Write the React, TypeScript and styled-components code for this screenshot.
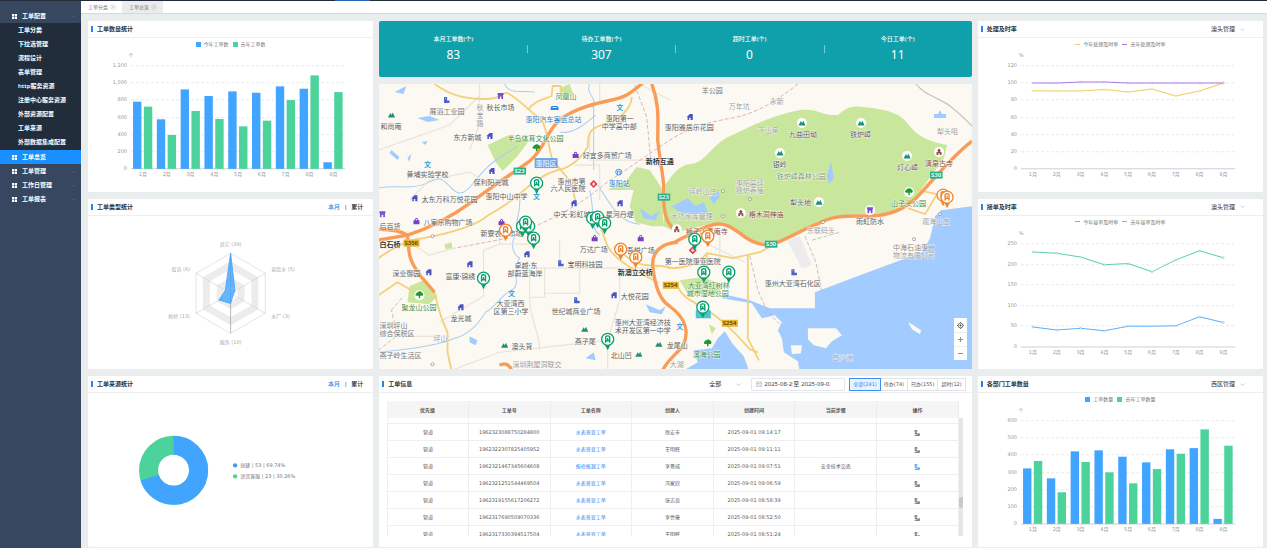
import React from "react";
import styled, { createGlobalStyle, css } from "styled-components";

const SANS = `"Noto Sans", "Noto Sans CJK SC", sans-serif`;
const DATA = `"DejaVu Sans", "Noto Sans CJK SC", sans-serif`;
const BLUE = "#41a5ff";
const GREEN = "#4bd39b";
const MONTHS = ["1月", "2月", "3月", "4月", "5月", "6月", "7月", "8月", "9月"];

const GlobalStyle = createGlobalStyle`
  *, *::before, *::after { box-sizing: border-box; }
  body { margin: 0; background: #e9edee; font-family: ${SANS}; font-size: 6px; line-height: 8px; color: #333; }
  button, input, select { font: inherit; color: inherit; margin: 0; padding: 0; border: 0; background: none; }
  ul { list-style: none; margin: 0; padding: 0; }
  h2 { margin: 0; font-size: 6px; }
`;

/* ---------- shell ---------- */

const Page = styled.div`
  min-height: 100vh;
  display: flex;
  flex-direction: column;
`;

const TopStrip = styled.div`
  height: 1px;
  display: flex;
  background: #242c3a;
  padding-left: 335px;
  &::after { content: ""; width: 35px; background: #2a62b8; }
`;

const Shell = styled.div`
  flex: 1;
  display: flex;
`;

const Sidebar = styled.nav`
  width: 81px;
  flex: none;
  padding-top: 8px;
  background: #36475f;
  color: #fff;
`;

const MenuLink = styled.a<{ $active?: boolean }>`
  display: flex;
  align-items: center;
  gap: 5px;
  height: 14px;
  padding: 0 5px 0 12px;
  color: #fff;
  font-weight: 600;
  text-decoration: none;
  background: ${(p) => (p.$active ? "#1890ff" : "transparent")};
`;

const MenuText = styled.span`
  flex: 1;
  white-space: nowrap;
`;

const SubMenu = styled.ul`
  background: #222d3c;
  padding-bottom: 1px;
`;

const SubLink = styled.a`
  display: flex;
  align-items: center;
  height: 14px;
  padding-left: 18px;
  color: #fff;
  font-weight: 600;
  text-decoration: none;
  white-space: nowrap;
`;

const Main = styled.main`
  flex: 1;
  min-width: 0;
  display: flex;
  flex-direction: column;
`;

const TabBar = styled.div`
  display: flex;
  height: 13px;
  flex: none;
  background: #fff;
  border-bottom: 1px solid #d5dadd;
`;

const Tab = styled.button<{ $active?: boolean }>`
  display: flex;
  align-items: center;
  gap: 2px;
  width: 41px;
  padding-left: 7px;
  font-size: 5px;
  white-space: nowrap;
  color: #777;
  background: ${(p) => (p.$active ? "#ececec" : "#fff")};
`;

const Board = styled.div`
  flex: 1;
  display: grid;
  grid-template-columns: 285fr 592fr 285fr;
  grid-template-rows: repeat(3, minmax(170px, 1fr));
  gap: 7px 6px;
  padding: 7px 4px 1px 7px;
`;

/* ---------- cards ---------- */

const Card = styled.section`
  min-width: 0;
  display: flex;
  flex-direction: column;
  background: #fff;
  border-radius: 1px;
`;

const CardHead = styled.header<{ $pad: number }>`
  display: flex;
  align-items: center;
  height: 17px;
  flex: none;
  padding: 0 ${(p) => p.$pad}px 0 3px;
  border-bottom: 1px solid #eceef0;
`;

const Title = styled.h2`
  flex: 1;
  display: flex;
  align-items: center;
  gap: 4px;
  font-weight: 600;
  color: #2b3240;
  &::before { content: ""; width: 2px; height: 6px; background: #2b83e6; }
`;

const CardBody = styled.div`
  flex: 1;
  min-height: 0;
  display: flex;
  flex-direction: column;
`;

const Legend = styled.ul`
  display: flex;
  justify-content: center;
  gap: 4px;
  height: 12px;
  flex: none;
`;

const LegendItem = styled.li<{ $color: string; $line?: boolean }>`
  display: flex;
  align-items: center;
  gap: 3px;
  font-size: 5px;
  color: #777;
  &::before {
    content: "";
    width: 5px;
    height: ${(p) => (p.$line ? 1 : 5)}px;
    background: ${(p) => p.$color};
  }
`;

const Chart = styled.svg`
  flex: 1;
  min-height: 0;
  width: 100%;
  display: block;
  font-family: ${DATA};
  font-size: 5px;
`;

const SelectBox = styled.span<{ $gap: number }>`
  display: flex;
  align-items: center;
  gap: ${(p) => p.$gap}px;
`;

const Select = styled.select`
  appearance: none;
  color: #333;
  outline: none;
`;

const Toggle = styled.div`
  display: flex;
  gap: 4px;
`;

const ToggleButton = styled.button<{ $on?: boolean }>`
  color: ${(p) => (p.$on ? "#1e88f5" : "#222")};
  font-weight: 500;
`;

/* ---------- stats + map ---------- */

const Center = styled.div`
  grid-column: 2;
  grid-row: 1 / 3;
  min-width: 0;
  display: flex;
  flex-direction: column;
  gap: 7px;
`;

const Stats = styled.dl`
  display: flex;
  height: 56px;
  flex: none;
  margin: 0;
  background: #0fa0ab;
  border-radius: 2px;
  color: #fff;
`;

const Stat = styled.div`
  flex: 1;
  display: flex;
  flex-direction: column;
  justify-content: center;
  align-items: center;
  gap: 4px;
`;

const StatLabel = styled.dt`
  font-weight: 500;
`;

const StatValue = styled.dd`
  margin: 0;
  font-size: 12px;
  line-height: 16px;
`;

const Divider = styled.div`
  align-self: center;
  width: 1px;
  margin: 0 -1px 0 0;
  height: 8px;
  background: #7ecbd1;
`;

const MapBox = styled.div`
  position: relative;
  flex: 1;
  min-height: 0;
  overflow: hidden;
  background: #fcf9f2;
`;

const MapSvg = styled.svg`
  position: absolute;
  inset: 0;
  width: 100%;
  height: 100%;
  font-family: ${SANS};
  font-size: 7px;
`;

const MapTools = styled.div`
  position: absolute;
  right: 5px;
  bottom: 9px;
  width: 13px;
  background: #fff;
  display: flex;
  flex-direction: column;
`;

const MapTool = styled.button`
  height: 14px;
  display: flex;
  align-items: center;
  justify-content: center;
  & + & { border-top: 1px solid #eee; }
`;

/* ---------- order table ---------- */

const DateRange = styled.div`
  display: flex;
  align-items: center;
  width: 94px;
  height: 13px;
  padding-left: 4px;
  margin: 0 5px 0 10px;
  border: 1px solid #e3e6ea;
  border-radius: 1px;
`;

const DateInput = styled.input`
  width: 31px;
  padding-left: 2px;
  color: #444;
  outline: none;
`;

const Filters = styled.div`
  display: flex;
`;

const Filter = styled.button<{ $on?: boolean }>`
  height: 13px;
  padding: 0 3px;
  margin-left: -1px;
  font-family: ${DATA};
  font-size: 5px;
  border: 1px solid #e0e3e7;
  color: #555;
  ${(p) =>
    p.$on &&
    css`
      position: relative;
      border-color: #3d8ff0;
      background: #e8f2ff;
      color: #2f86f2;
    `}
`;

const TableArea = styled.div`
  flex: 1 1 0;
  min-height: 0;
  display: flex;
  margin: 8px 9px 11px 8px;
  overflow: hidden;
`;

const TableClip = styled.div`
  flex: 1;
  min-width: 0;
`;

const Table = styled.table`
  width: 100%;
  table-layout: fixed;
  border-collapse: separate;
  border-spacing: 0;
  font-family: ${DATA};
  font-size: 5px;
  line-height: 8px;
  color: #5a5a5a;
  text-align: center;
`;

const Th = styled.th`
  height: 17px;
  padding: 0;
  background: #f5f5f5;
  border-right: 1px solid #ececec;
  font-weight: 600;
  color: #555;
`;

const Td = styled.td<{ $part?: boolean }>`
  height: ${(p) => (p.$part ? 6 : 17)}px;
  padding: 0;
  line-height: ${(p) => (p.$part ? 4 : 8)}px;
  border-right: 1px solid #efefef;
  border-bottom: 1px solid #efefef;
  &:first-child { border-left: 1px solid #efefef; }
`;

const OrderLink = styled.a`
  color: #2f86f2;
  text-decoration: none;
`;

const IconButton = styled.button<{ $on?: boolean }>`
  display: inline-flex;
  vertical-align: middle;
  color: ${(p) => (p.$on ? "#2f86f2" : "#555")};
`;

const ScrollTrack = styled.div`
  width: 4px;
  margin-top: 17px;
  padding-top: 79px;
  background: #e6e6e6;
  &::before { content: ""; display: block; height: 11px; background: #c9c9c9; border-radius: 2px; }
`;

/* ---------- small icons ---------- */

const GridIcon = () => (
  <svg width="5" height="5" viewBox="0 0 5 5" fill="#fff" aria-hidden>
    <path d="M0 0h2.2v2.2H0zM2.8 0H5v2.2H2.8zM0 2.8h2.2V5H0zM2.8 2.8H5V5H2.8z" />
  </svg>
);

const Chevron = ({ color = "#a9adb3" }: { color?: string }) => (
  <svg width="5" height="5" viewBox="0 0 5 5" fill="none" stroke={color} strokeWidth="0.6" aria-hidden>
    <path d="M0.5 1.6 2.5 3.5 4.5 1.6" />
  </svg>
);

const CloseIcon = () => (
  <svg width="6" height="6" viewBox="0 0 6 6" fill="none" stroke="#bbb" strokeWidth="0.5" aria-hidden>
    <circle cx="3" cy="3" r="2.4" />
    <path d="M2 2l2 2M4 2l-2 2" />
  </svg>
);

const CalendarIcon = () => (
  <svg width="6" height="6" viewBox="0 0 6 6" fill="none" stroke="#aaa" strokeWidth="0.5" aria-hidden>
    <path d="M.5 1h5v4.5h-5zM.5 2.5h5M.5 4h5M1.8.3v1M4.2.3v1" />
  </svg>
);

const TrackIcon = () => (
  <svg width="6" height="6" viewBox="0 0 6 6" fill="none" stroke="currentColor" strokeWidth="0.7" aria-hidden>
    <path d="M.9.5h2v1.6h-2zM1.9 2.1v1.4M.6 3.6h2.3v1.8M.6 5.4h5M3.9 3.7h1.5v1.4H3.9z" />
  </svg>
);

/* ---------- charts ---------- */

const X0 = 43;
const X1 = 257;
const Y_TOP = 27;
const Y_ZERO = 130;
const BAND = (X1 - X0) / 9;

type AxesProps = { max: number; step: number; unit: string };

const Axes = ({ max, step, unit }: AxesProps) => {
  const ticks = Array.from({ length: max / step + 1 }, (_, i) => i * step);
  return (
    <g fill="#999">
      <text x={X0} y="19" textAnchor="middle">{unit}</text>
      {ticks.map((t) => {
        const y = Math.round(Y_ZERO - (t / max) * (Y_ZERO - Y_TOP)) + 0.5;
        return (
          <g key={t}>
            <path d={`M${X0} ${y}H${X1}`} stroke={t ? "#e8eaed" : "#ccd0d6"} strokeWidth="1" strokeDasharray={t ? "3 2" : undefined} />
            <text x={X0 - 4} y={y + 1.5} textAnchor="end">{t.toLocaleString("en-US")}</text>
          </g>
        );
      })}
      {MONTHS.map((m, i) => (
        <text key={m} x={X0 + BAND * (i + 0.5)} y="138" textAnchor="middle">{m}</text>
      ))}
    </g>
  );
};

type ChartProps = AxesProps & { names: [string, string]; colors: [string, string]; a: number[]; b: number[] };

const BarChart = ({ names, colors, a, b, ...axes }: ChartProps) => {
  const h = (v: number) => (v / axes.max) * (Y_ZERO - Y_TOP);
  return (
    <CardBody>
      <Legend>
        {names.map((n, i) => <LegendItem key={n} $color={colors[i]}>{n}</LegendItem>)}
      </Legend>
      <Chart viewBox="0 12 285 141" role="img" aria-label={names.join(" / ")}>
        <Axes {...axes} />
        {MONTHS.map((m, i) => (
          <g key={m}>
            <rect x={X0 + BAND * i + 2} y={Y_ZERO + 0.5 - h(a[i])} width="8.4" height={h(a[i])} fill={colors[0]} />
            <rect x={X0 + BAND * i + 12.8} y={Y_ZERO + 0.5 - h(b[i])} width="8.4" height={h(b[i])} fill={colors[1]} />
          </g>
        ))}
      </Chart>
    </CardBody>
  );
};

const LineChart = ({ names, colors, a, b, ...axes }: ChartProps) => {
  const pt = (v: number, i: number) => [X0 + BAND * (i + 0.5), Y_ZERO + 0.5 - (v / axes.max) * (Y_ZERO - Y_TOP)];
  return (
    <CardBody>
      <Legend>
        {names.map((n, i) => <LegendItem key={n} $color={colors[i]} $line>{n}</LegendItem>)}
      </Legend>
      <Chart viewBox="0 12 285 141" role="img" aria-label={names.join(" / ")}>
        <Axes {...axes} />
        {[a, b].map((s, k) => (
          <g key={k} fill="#fff" stroke={colors[k]} strokeWidth="1">
            <polyline fill="none" points={s.map((v, i) => pt(v, i).join(",")).join(" ")} />
            {s.map((v, i) => (
              <circle key={i} cx={pt(v, i)[0]} cy={pt(v, i)[1]} r="0.9" strokeWidth="0.5" />
            ))}
          </g>
        ))}
      </Chart>
    </CardBody>
  );
};

const hex = (cx: number, cy: number, radii: number[]) =>
  radii
    .map((r, i) => {
      const t = (Math.PI / 3) * i - Math.PI / 2;
      return `${(cx + r * Math.cos(t)).toFixed(2)},${(cy + r * Math.sin(t)).toFixed(2)}`;
    })
    .join(" ");

const RadarChart = () => {
  const cx = 142.5;
  const cy = 77;
  const R = 40;
  const values = [39, 5, 3, 10, 13, 6];
  return (
    <CardBody>
      <Chart viewBox="0 0 285 153" role="img" aria-label="工单类型统计">
        {[40, 32, 24, 16, 8].map((r, i) => (
          <polygon key={r} points={hex(cx, cy, Array(6).fill(r))} fill={i % 2 ? "#ececec" : "#fff"} stroke={i ? "none" : "#d3d3d3"} strokeWidth="0.6" />
        ))}
        {[0, 1, 2, 3, 4, 5].map((i) => {
          const t = (Math.PI / 3) * i - Math.PI / 2;
          return <line key={i} x1={cx} y1={cy} x2={cx + R * Math.cos(t)} y2={cy + R * Math.sin(t)} stroke={i % 3 ? "#cfcfcf" : "#8c8c8c"} strokeWidth="0.6" />;
        })}
        <polygon points={hex(cx, cy, values.map((v) => (v / 39) * R))} fill={BLUE} fillOpacity="0.8" stroke={BLUE} strokeWidth="0.8" />
        <g fill="#aaa">
          <text x={cx} y="30" textAnchor="middle">其它 (39)</text>
          <text x="183" y="55">直饮水 (5)</text>
          <text x="183" y="102">水厂 (3)</text>
          <text x={cx} y="128" textAnchor="middle">服务 (10)</text>
          <text x="102" y="102" textAnchor="end">抢修 (13)</text>
          <text x="102" y="55" textAnchor="end">投诉 (6)</text>
        </g>
      </Chart>
    </CardBody>
  );
};

const DonutChart = () => {
  const r = 25;
  const c = 2 * Math.PI * r;
  return (
    <CardBody>
      <Chart viewBox="0 0 285 153" role="img" aria-label="工单来源统计">
        <g transform="rotate(-90 85.5 77)" fill="none" strokeWidth="19">
          <circle cx="85.5" cy="77" r={r} stroke={GREEN} />
          <circle cx="85.5" cy="77" r={r} stroke={BLUE} strokeDasharray={`${c * 0.6974} ${c}`} />
        </g>
        <circle cx="147" cy="72" r="2.2" fill="#3f9de8" />
        <circle cx="147" cy="83" r="2.2" fill={GREEN} />
        <g fill="#777">
          <text x="152" y="74">创建 | 53 | 69.74%</text>
          <text x="152" y="85">语音客服 | 23 | 30.26%</text>
        </g>
      </Chart>
    </CardBody>
  );
};

/* ---------- map ---------- */

const INK = "#5c5c5c";
const PALE = "#a0a0a0";
const LEAF = "#3f8f4a";
const BROWN = "#8a5340";
const SKY = "#2f7fc4";

type Label = [number, number, string, string?, boolean?];

const LABELS: Label[] = [
  [430, 111, "展滔工业园", "#777"], [487, 107, "秋长市场"], [381, 126, "和尚庵"], [454, 137, "东方新城"],
  [477, 107, "秋", PALE], [477, 115, "宝", PALE], [477, 123, "路", PALE],
  [508, 138, "半岛体育文化公园", LEAF], [556, 96, "凤凰山", LEAF], [526, 119, "惠阳汽车客运总站", SKY],
  [606, 118, "惠阳第一"], [602, 126, "中学高中部"], [665, 127, "惠阳雅居乐花园"], [407, 174, "黄埔实验学校"],
  [474, 182, "保利阳光城"], [583, 155, "好宜多商贸广场"], [646, 161, "新桥互通", "#333", true],
  [558, 181, "惠州市第"], [551, 188, "六人民医院"], [609, 183, "惠阳站", SKY],
  [702, 91, "羊公园", "#777"], [729, 106, "万年坑", PALE], [770, 101, "永新", PALE], [789, 134, "九曲田坳"],
  [850, 134, "铁炉嶂"], [758, 130, "下山窝", PALE], [773, 164, "银岭"], [777, 176, "铁炉嶂森林公园", "#7d9a70"],
  [897, 167, "灯心嶂"], [925, 163, "清泉古寺", BROWN], [937, 131, "犁头咀", PALE], [790, 202, "犁头地"],
  [749, 214, "格木洞神庙", BROWN], [891, 203, "山子头公园", LEAF], [856, 221, "雨虹防水"],
  [689, 191, "坪岭山庄", PALE], [736, 183, "惠阳高坪", PALE], [736, 190, "铁炉养殖", PALE],
  [671, 216, "大坑水库管理", PALE], [922, 221, "观海山庄", PALE], [807, 230, "东联码头", PALE],
  [422, 199, "太东万科万悦花园"], [486, 196, "惠阳中山中学"], [554, 214, "中天·彩虹城"], [606, 214, "星河丹堤"],
  [424, 222, "八家乐购物广场"], [380, 226, "后百货"], [380, 244, "白石桥", "#333", true], [481, 233, "新寮农贸市场"],
  [580, 249, "万达广场"], [627, 250, "吾悦广场"], [515, 265, "卓越·东"], [508, 273, "部蔚蓝海岸"],
  [568, 264, "宝明科技园"], [618, 272, "新澳立交桥", "#333", true], [393, 273, "深业御园"], [446, 276, "富康·锦绣"],
  [402, 307, "聚龙山公园", LEAF], [497, 303, "大亚湾西"], [494, 311, "区第三小学"], [451, 318, "龙光城"],
  [552, 311, "世纪城商业广场"], [621, 296, "大悦花园"], [615, 322, "惠州大亚湾经济技"], [615, 330, "术开发区第一中学"],
  [380, 325, "深圳坪山", "#777"], [380, 333, "综合保税区", "#777"], [434, 338, "坪山", PALE], [380, 355, "燕子岭生活区", "#777"],
  [512, 346, "澳头背"], [575, 341, "燕子尾"], [611, 355, "北山凹"], [667, 345, "龙尾山"], [513, 364, "深圳荆屋洞联交", "#999"],
  [665, 261, "第一医院惠亚医院"], [686, 231, "狮子山善庵寺", BROWN], [688, 285, "大亚湾红树林", LEAF], [687, 293, "城市湿地公园", LEAF],
  [765, 283, "惠州大亚湾石化区"], [893, 247, "中海石油惠州", "#888"], [893, 255, "物流有限公司", PALE],
  [693, 354, "滨海公园", LEAF], [670, 364, "大湖", PALE], [832, 357, "白沙洲", "#8aa6c8"],
];

const ORANGE_ROADS = [
  "M643 83C630 94 626 97 612 100S575 108 560 120C546 132 546 148 530 161C512 174 500 181 472 202C450 218 430 228 408 235L378 240",
  "M378 229C395 229 402 231 408 235C409 244 409 252 411 258S420 276 424 279L435 292",
  "M652 84C660 105 658 120 658 140C660 160 663 172 664 186C663 212 666 222 675 230",
  "M675 242C690 234 700 228 712 225C724 221 733 228 740 233C752 243 762 246 773 244C790 238 805 228 817 224C835 214 850 216 870 216C890 215 903 210 917 197C935 178 950 158 972 141",
  "M678 242C660 243 652 253 653 266C655 285 660 300 670 306C686 318 690 332 683 346C674 356 666 362 663 370",
  "M500 365C505 362 510 364 512 370",
];

const YELLOW_ROADS = [
  "M435 84C450 95 465 99 485 99S502 91 508 93C518 98 530 111 542 120C549 132 548 146 553 160L568 178",
  "M528 110C536 100 545 99 552 96L553 86H561V92",
  "M632 97C632 108 618 122 605 124C594 128 588 128 588 147C580 160 570 168 558 170C540 175 532 184 515 198C500 210 490 213 485 218C470 228 440 236 412 240C398 245 390 250 379 258",
  "M572 184L576 202M593 212C602 222 603 236 608 246C614 258 630 268 658 282",
  "M435 292C438 305 442 320 448 332V352L452 370",
  "M379 295L398 282L412 290",
  "M668 268C690 268 700 262 707 253L733 258L760 252L775 244M707 253V286",
  "M748 255V338L759 360",
  "M677 283C680 295 690 300 703 307C720 317 735 332 750 349L758 352",
  "M908 208L925 214L937 194L918 190",
  "M620 250C640 272 655 262 672 268",
];

const MINOR_ROADS = [
  "M480 84V125L470 150", "M379 150L450 125L480 96", "M484 280V250L500 244H530M500 244V226M400 235L430 255L455 248",
  "M530 268H658M530 268V297H545V268M580 268V293H545M530 297C530 320 540 330 540 350", "M484 280L484 296L440 322M398 336H450",
  "M590 132V160H660M575 165H600V200M410 200L430 180L470 172L490 184", "M720 232V260M700 240L745 262", "M640 84L670 100M600 84V104",
  "M560 240V268M620 268V300L608 340V369M455 369L500 352L608 340",
];

const STREAMS = [
  "M379 188C395 184 410 190 425 184S440 175 452 188S470 186 485 170S515 150 518 146",
  "M505 84C510 95 520 90 535 92M590 84C585 95 600 98 592 108M594 100V170",
  "M518 232C508 245 515 255 520 258C512 270 522 285 512 290C500 296 498 305 486 312C478 325 468 335 455 338C440 345 400 350 379 352",
  "M590 190C596 215 590 228 600 235M598 185C612 205 618 222 640 224",
  "M520 195C522 215 514 220 518 232M560 132C575 135 590 120 596 115",
];

type Poi = [string, number, number];

const POIS: Poi[] = [
  ["factory", 447, 100], ["factory", 561, 263], ["factory", 577, 300], ["factory", 794, 272],
  ["shop", 501, 96], ["shop", 383, 214], ["shopO", 870, 210], ["bus", 555, 108],
  ["school", 620, 107], ["school", 428, 164], ["school", 537, 196], ["school", 512, 293], ["school", 680, 326],
  ["house", 490, 136], ["house", 492, 171], ["house", 690, 117], ["house", 415, 198], ["house", 574, 203],
  ["house", 620, 203], ["house", 527, 254], ["house", 470, 264], ["house", 429, 272], ["house", 461, 307], ["house", 614, 295],
  ["bag", 576, 155], ["bag", 417, 221], ["bag", 502, 222], ["bag", 595, 238], ["bag", 641, 238],
  ["hill", 392, 115], ["hill", 505, 345], ["hill", 585, 329], ["hill", 639, 354], ["hill", 659, 344],
  ["hillO", 802, 123], ["hillO", 861, 123], ["hillO", 780, 153], ["hillO", 907, 156], ["hillO", 819, 202],
  ["tree", 537, 148], ["treeO", 909, 192], ["treeO", 420, 295], ["tree", 708, 343],
  ["templeO", 939, 152], ["templeO", 741, 213], ["templeO", 677, 229],
  ["cross", 594, 184], ["cross", 693, 250], ["station", 619, 172],
  ["dot", 723, 191], ["dot", 723, 216], ["dot", 750, 199], ["dot", 823, 222], ["dot", 940, 214], ["dot", 914, 239], ["dot", 433, 236], ["dot", 433, 364],
];

const poiShape = (kind: string) => {
  switch (kind) {
    case "factory": return <path d="M-2.5 3V-3H.6V.6H3V3Z M-1.4-1.800V-.9H-.4V-1.800Z" fillRule="evenodd" fill="#4a62c8" />;
    case "shop": return <path d="M-3-3H3V-1H2.5V3H.8V.5H-.8V3H-2.5V-1H-3Z" fill="#7b4fd0" />;
    case "bus": return <path d="M-3-2H3L4 0V2H-4V0Z M-2-1V0H2V-1Z" fillRule="evenodd" fill="#2f86e0" />;
    case "house": return <path d="M-3 0 0-3H3V3H.8V.8H-.6V3H-2.2V0Z" fill="#4a55c4" />;
    case "bag": return <path d="M-3-1H-1.7C-1.7-4 1.7-4 1.7-1H3V3H-3ZM-.8-1H.8C.8-2.6-.8-2.6-.8-1Z" fillRule="evenodd" fill="#7b3fc8" />;
    case "hill": return <path d="M-3.5 2.5-1-2 .2 0 1.4-2.5 3.6 2.5Z" fill="#1f9076" />;
    case "tree": return <path d="M-4 0C-4-2-2.5-2-2-3C0-4.5 2-4 2.5-2.5C4-2 4 0 3 .6H.7V3H-.7V.6H-3Z" fill="#1c9a2e" />;
    case "temple": return <path d="M0-3.5 2-1.5H1.2V0H2.5V3H.7V1.2H-.7V3H-2.5V0H-1.2V-1.5H-2Z" fill="#93503c" />;
    case "cross": return <path d="M0-4 4 0 0 4-4 0ZM-.5-1.8V-.5H-1.8V.5H-.5V1.8H.5V.5H1.8V-.5H.5V-1.8Z" fillRule="evenodd" fill="#e0354a" />;
    case "station": return <g fill="none" stroke="#3f8fe8" strokeWidth="0.9"><circle r="3" /><path d="M-1.3 2.8V-1H1.3V2.8" /></g>;
    default: return <circle r="1.5" fill="#fff" stroke="#888" strokeWidth="0.7" />;
  }
};

const PoiMark = ({ kind, x, y }: { kind: string; x: number; y: number }) => {
  if (kind === "school") return <text x={x} y={y + 3} textAnchor="middle" fill="#2a9be0" fontWeight="700">文</text>;
  const ringed = kind.endsWith("O");
  return (
    <g transform={`translate(${x} ${y})`}>
      {ringed && <circle r="5" fill="#fff" />}
      {poiShape(ringed ? kind.slice(0, -1) : kind)}
    </g>
  );
};

type Badge = [number, number, string, string, string];

const BADGES: Badge[] = [
  [404, 240, "S356", "#e8b52e", "#5a4200"], [663, 282, "S254", "#e8b52e", "#5a4200"], [722, 320, "S254", "#e8b52e", "#5a4200"],
  [514, 168, "S23", "#27b08b", "#fff"], [658, 194, "S23", "#27b08b", "#fff"], [930, 172, "S30", "#27b08b", "#fff"], [765, 241, "S30", "#27b08b", "#fff"],
];

type Pin = [number, number, boolean?];

const PINS: Pin[] = [
  [537, 183], [506, 230, true], [523, 226], [529, 226], [526, 222], [534, 238], [484, 278], [593, 218], [598, 217], [605, 223],
  [608, 339], [621, 249, true], [636, 257, true], [708, 236, true], [695, 239], [704, 272], [729, 272], [703, 307],
  [943, 195, true], [947, 197, true],
];

const PinMark = ({ x, y, warm }: { x: number; y: number; warm?: boolean }) => {
  const c = warm ? "#f0862b" : "#0aa06e";
  return (
    <g transform={`translate(${x} ${y})`}>
      <path d="M-3 5 0 11 3 5Z" fill={c} />
      <circle r="6" fill="#fff" stroke={c} strokeWidth="1.3" />
      <path d="M-2 3.4V-2Q-2-3.4 0-3.4T2-2V3.4M-2 1.5H2M0-1.3V1.5" fill="none" stroke={c} strokeWidth="1.4" />
    </g>
  );
};

const CityMap = () => (
  <MapSvg viewBox="379 84 593 285" preserveAspectRatio="xMidYMid slice" role="img" aria-label="工单分布地图">
    <rect x="370" y="70" width="610" height="310" fill="#fcf9f2" />
    <g fill="#c9e69d">
      <path d="M666 184C672 176 678 166 690 164C706 164 712 142 735 134C755 124 775 115 800 110C820 108 820 116 838 115C850 104 856 106 872 108C892 111 900 114 908 124C918 138 932 142 947 145L944 158L918 194C905 208 895 212 870 214C845 213 832 217 810 226L780 241C765 246 750 240 735 228C718 218 705 226 676 232L664 226Z" />
      <path d="M608 190C620 182 626 184 630 176L637 167L650 170L662 188L664 226L652 226L636 222L630 206L634 190Z" />
      <path d="M488 145L507 136L530 140L518 156L503 171L496 162Z" />
      <path d="M560 88L570 84L574 95L562 98ZM410 286L424 280L438 296L430 304L408 302Z" />
      <path d="M680 280L702 277L722 284L720 294L688 294ZM709 324L716 328L712 334ZM445 244L452 242L453 248L446 249Z" />
    </g>
    <path d="M787 240L800 236L812 265L802 268Z" fill="#ececec" />
    <g fill="#a2cbff">
      <path d="M935 216L941 210L972 206V372H800L798 361L784 352L782 338L778 330L782 322L775 315L762 318L752 303L722 298L724 294L750 300L770 308H815V292L860 275L922 252L930 238Z" />
      <path d="M725 331L733 344L744 356L749 370H684L698 362L694 350L712 348L718 338Z" />
      <path d="M672 206L688 198L696 206L704 202L708 212L694 214L680 212ZM718 190L720 196L714 204L710 198ZM831 162L834 178L829 184L827 176ZM640 208L652 216L660 210L656 220L644 218ZM940 110L942 114L946 114V118H934V114L938 114Z" />
      <path d="M392 150L400 157L398 160L390 153ZM418 118L430 116L440 120L428 122ZM395 92L407 86L404 94ZM470 336L478 340L476 345L470 342ZM646 304L660 310L666 306L662 314L650 312ZM586 358L594 352L596 360ZM422 142L428 141L426 145ZM408 158L412 154L410 162Z" />
    </g>
    <path d="M808 328H836L842 335L832 341L826 348L814 345L808 339ZM791 345H802L801 353L792 354ZM908 322L912 324L921 330L920 334L912 329Z" fill="#fcf9f2" />
    <g fill="none" stroke="#a9cdf6" strokeWidth="1">{STREAMS.map((d) => <path key={d} d={d} />)}</g>
    <g fill="none" stroke="#e7e4dc" strokeWidth="1.2">{MINOR_ROADS.map((d) => <path key={d} d={d} />)}</g>
    <path d="M916 84C925 96 940 98 950 106S966 120 972 126" fill="none" stroke="#c9c3c0" strokeWidth="1.2" />
    <g fill="none" strokeDasharray="4 2" strokeWidth="0.9">
      <path d="M798 84C780 98 760 112 737 117C710 122 690 127 670 140L605 184C570 214 530 228 508 238L455 248" stroke="#dba9ae" />
      <path d="M635 85L647 117L651 160M750 256L758 290L768 312L784 328M805 236L816 262L822 292M812 240L840 232M392 310L404 296M379 350L398 335L392 310" stroke="#bbb" />
    </g>
    <g fill="none" stroke="#f5d07c" strokeWidth="1.8" strokeLinejoin="round">{YELLOW_ROADS.map((d) => <path key={d} d={d} />)}</g>
    <g fill="none" stroke="#f99c57" strokeWidth="3.4" strokeLinejoin="round">{ORANGE_ROADS.map((d) => <path key={d} d={d} />)}</g>
    <rect x="535" y="158" width="23" height="10" fill="#6ea3ee" />
    <text x="536" y="166" fill="#fff">惠阳区</text>
    <rect x="696" y="310" width="15" height="8" fill="#4cc3cf" />
    {POIS.map(([k, x, y]) => <PoiMark key={`${k}${x}-${y}`} kind={k} x={x} y={y} />)}
    <g stroke="#fff" strokeOpacity="0.7" strokeWidth="1" style={{ paintOrder: "stroke" }}>
      {LABELS.map(([x, y, t, c = INK, b]) => (
        <text key={`${t}${x}-${y}`} x={x} y={y + 2.5} fill={c} fontWeight={b ? 600 : 400}>{t}</text>
      ))}
    </g>
    {BADGES.map(([x, y, t, bg, fg]) => (
      <g key={`${t}${x}`}>
        <rect x={x} y={y - 0.5} width={t.length * 3.5 + 2} height="7" fill={bg} />
        <text x={x + 1} y={y + 5} fontSize="6" fontWeight="600" fill={fg}>{t}</text>
      </g>
    ))}
    {PINS.map(([x, y, warm]) => <PinMark key={`${x}-${y}`} x={x} y={y} warm={warm} />)}
  </MapSvg>
);

/* ---------- data ---------- */

const SUB_ITEMS = ["工单分类", "下拉选管理", "流程设计", "表单管理", "http服务资源", "注册中心服务资源", "外部资源配置", "工单来源", "外部数据集成配置"];

const STATS: [string, string][] = [["本月工单数(个)", "83"], ["待办工单数(个)", "307"], ["超时工单(个)", "0"], ["今日工单(个)", "11"]];

const COLUMNS = ["优先级", "工单号", "工单名称", "创建人", "创建时间", "当前步骤", "操作"];

const ORDERS = [
  ["1962323088750284800", "水表普查工单", "徐宏丰", "2025-09-01 09:14:17", ""],
  ["1962322307825405952", "水表普查工单", "王明辉", "2025-09-01 09:11:11", ""],
  ["1962321467345604608", "报修报漏工单", "李景威", "2025-09-01 09:07:51", "安全技术交底"],
  ["1962321251544469504", "水表普查工单", "冯家欣", "2025-09-01 09:06:59", ""],
  ["1962319155617206272", "水表普查工单", "张志良", "2025-09-01 08:58:39", ""],
  ["1962317690509070336", "水表普查工单", "李世豪", "2025-09-01 08:52:50", ""],
  ["1962317330394517504", "水表普查工单", "王明辉", "2025-09-01 08:51:24", ""],
];

const FILTERS = ["全部(241)", "待办(74)", "已办(155)", "超时(12)"];

const PeriodToggle = () => (
  <Toggle>
    <ToggleButton type="button" $on>本月</ToggleButton>
    <span>|</span>
    <ToggleButton type="button">累计</ToggleButton>
  </Toggle>
);

const AreaSelect = ({ label, value }: { label: string; value: string }) => (
  <SelectBox $gap={4}>
    <Select aria-label={label} defaultValue={value}>
      <option>{value}</option>
    </Select>
    <Chevron />
  </SelectBox>
);

export default function App() {
  return (
    <Page>
      <GlobalStyle />
      <TopStrip />
      <Shell>
        <Sidebar>
          <MenuLink href="#config"><GridIcon /><MenuText>工单配置</MenuText><Chevron color="#5f6f86" /></MenuLink>
          <SubMenu>
            {SUB_ITEMS.map((s) => <li key={s}><SubLink href="#config">{s}</SubLink></li>)}
          </SubMenu>
          <MenuLink href="#overview" $active><GridIcon /><MenuText>工单总览</MenuText></MenuLink>
          {["工单管理", "工作日管理", "工单报表"].map((m) => (
            <MenuLink key={m} href="#manage"><GridIcon /><MenuText>{m}</MenuText><Chevron color="#5f6f86" /></MenuLink>
          ))}
        </Sidebar>
        <Main>
          <TabBar>
            <Tab type="button">工单分类<CloseIcon /></Tab>
            <Tab type="button" $active>工单总览<CloseIcon /></Tab>
          </TabBar>
          <Board>
            <Card>
              <CardHead $pad={10}><Title>工单数量统计</Title></CardHead>
              <BarChart
                names={["今年工单数", "去年工单数"]} colors={[BLUE, GREEN]} max={1200} step={200} unit="个"
                a={[782, 577, 925, 848, 902, 886, 960, 933, 77]}
                b={[724, 395, 674, 581, 495, 561, 801, 1088, 894]}
              />
            </Card>

            <Center>
              <Stats>
                {STATS.map(([label, value], i) => (
                  <React.Fragment key={label}>
                    {i > 0 && <Divider />}
                    <Stat><StatLabel>{label}</StatLabel><StatValue>{value}</StatValue></Stat>
                  </React.Fragment>
                ))}
              </Stats>
              <MapBox>
                <CityMap />
                <MapTools>
                  <MapTool type="button" aria-label="定位">
                    <svg width="7" height="7" viewBox="0 0 7 7" fill="none" stroke="#555" strokeWidth="0.8"><circle cx="3.5" cy="3.5" r="2.4" /><circle cx="3.5" cy="3.5" r="0.7" fill="#555" /><path d="M3.5 0v1M3.5 6v1M0 3.5h1M6 3.5h1" /></svg>
                  </MapTool>
                  <MapTool type="button" aria-label="放大">
                    <svg width="7" height="7" viewBox="0 0 7 7" stroke="#777" strokeWidth="0.8"><path d="M3.5 1v5M1 3.5h5" /></svg>
                  </MapTool>
                  <MapTool type="button" aria-label="缩小">
                    <svg width="7" height="7" viewBox="0 0 7 7" stroke="#777" strokeWidth="0.8"><path d="M1 3.5h5" /></svg>
                  </MapTool>
                </MapTools>
              </MapBox>
            </Center>

            <Card>
              <CardHead $pad={18}><Title>处理及时率</Title><AreaSelect label="处理及时率区域" value="澳头管理" /></CardHead>
              <LineChart
                names={["今年处理及时率", "去年处理及时率"]} colors={["#f0cc62", "#a67be6"]} max={120} step={20} unit="%"
                a={[91, 90.6, 90.6, 92.5, 89.4, 92.9, 84.8, 90.6, 100]}
                b={[100, 100, 101, 101, 100, 100, 100, 100, 100]}
              />
            </Card>

            <Card>
              <CardHead $pad={10}><Title>工单类型统计</Title><PeriodToggle /></CardHead>
              <RadarChart />
            </Card>

            <Card>
              <CardHead $pad={18}><Title>接单及时率</Title><AreaSelect label="接单及时率区域" value="澳头管理" /></CardHead>
              <LineChart
                names={["今年接单及时率", "去年接单及时率"]} colors={["#63aef5", "#5fd0a4"]} max={250} step={50} unit="%"
                a={[48, 41, 45, 39, 50, 50, 51, 73, 59]}
                b={[230, 227, 218, 199, 202, 182, 211, 233, 216]}
              />
            </Card>

            <Card>
              <CardHead $pad={10}><Title>工单来源统计</Title><PeriodToggle /></CardHead>
              <DonutChart />
            </Card>

            <Card>
              <CardHead $pad={6}>
                <Title>工单信息</Title>
                <SelectBox $gap={14}>
                  <Select aria-label="工单范围" defaultValue="全部"><option>全部</option></Select>
                  <Chevron />
                </SelectBox>
                <DateRange>
                  <CalendarIcon />
                  <DateInput aria-label="开始日期" defaultValue="2025-08-25" />
                  至
                  <DateInput aria-label="结束日期" defaultValue="2025-09-02" />
                </DateRange>
                <Filters>
                  {FILTERS.map((f, i) => <Filter key={f} type="button" $on={i === 0}>{f}</Filter>)}
                </Filters>
              </CardHead>
              <TableArea>
                <TableClip>
                  <Table>
                    <thead>
                      <tr>{COLUMNS.map((c) => <Th key={c} scope="col">{c}</Th>)}</tr>
                    </thead>
                    <tbody>
                      <tr>{COLUMNS.map((c) => <Td key={c} $part />)}</tr>
                      {ORDERS.map(([id, name, who, time, step]) => (
                        <tr key={id}>
                          <Td>管道</Td>
                          <Td>{id}</Td>
                          <Td><OrderLink href="#order">{name}</OrderLink></Td>
                          <Td>{who}</Td>
                          <Td>{time}</Td>
                          <Td>{step}</Td>
                          <Td><IconButton type="button" aria-label="流程跟踪" $on={step !== ""}><TrackIcon /></IconButton></Td>
                        </tr>
                      ))}
                    </tbody>
                  </Table>
                </TableClip>
                <ScrollTrack />
              </TableArea>
            </Card>

            <Card>
              <CardHead $pad={18}><Title>各部门工单数量</Title><AreaSelect label="部门区域" value="西区管理" /></CardHead>
              <BarChart
                names={["工单数量", "去年工单数量"]} colors={[BLUE, GREEN]} max={600} step={100} unit="个"
                a={[323, 265, 422, 428, 391, 358, 434, 441, 29]}
                b={[366, 184, 360, 300, 236, 319, 408, 550, 455]}
              />
            </Card>
          </Board>
        </Main>
      </Shell>
    </Page>
  );
}
